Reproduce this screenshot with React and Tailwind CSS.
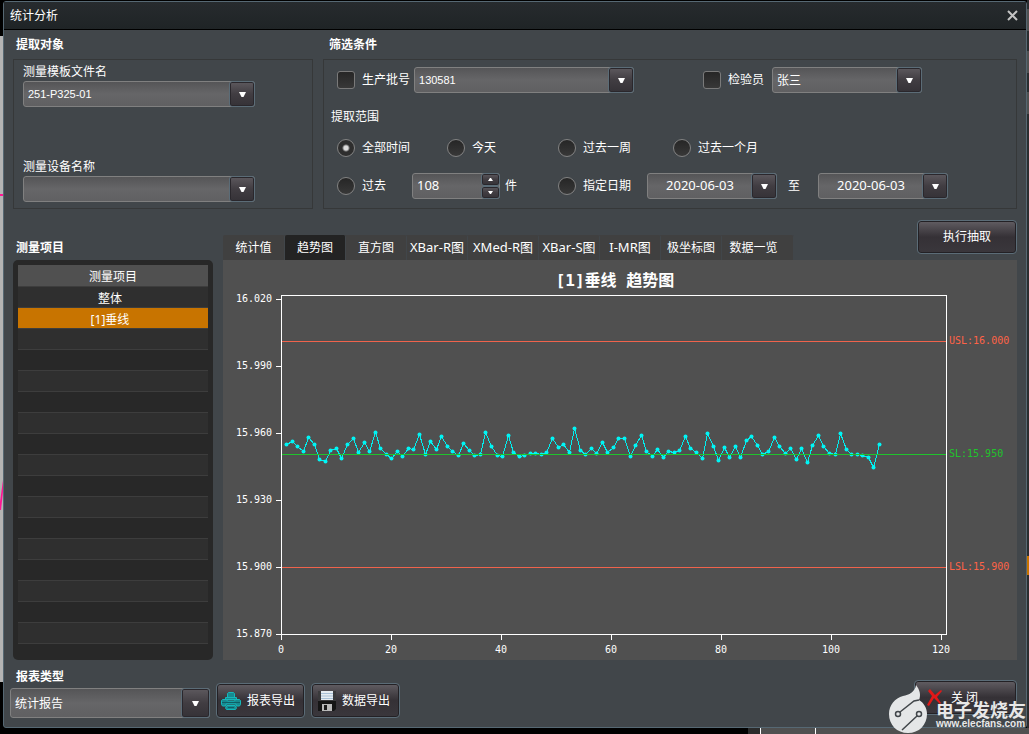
import React, { useState } from 'react'
import clsx from 'clsx'

const UI_FONT = "font-['Noto_Sans','Noto_Sans_CJK_SC',sans-serif]"
const VALUE_FONT = "font-['Liberation_Sans','Noto_Sans_CJK_SC',sans-serif]"

const TABS = [
  { name: '统计值',   cls: 'w-[62px] text-xs' },
  { name: '趋势图',   cls: 'w-[61px] text-xs' },
  { name: '直方图',   cls: 'w-[61px] text-xs' },
  { name: 'XBar-R图', cls: 'w-[61px] text-[13px]' },
  { name: 'XMed-R图', cls: 'w-[71px] text-[13px]' },
  { name: 'XBar-S图', cls: 'w-[61px] text-[13px]' },
  { name: 'I-MR图',   cls: 'w-[61px] text-[13px]' },
  { name: '极坐标图', cls: 'w-[61px] text-xs' },
  { name: '数据一览', cls: 'w-[72px] pr-[8px] text-xs' },
]

const ITEMS = ['整体', '[1]垂线']
const ROW_COUNT = 17

// sample depth below the 150 line of the chart, three steps per unit
const SAMPLES = [
  102, 93, 108, 123, 81, 104, 147, 153, 120, 114, 144, 104, 84, 126, 96, 123, 66, 114,
  132, 144, 123, 138, 114, 117, 72, 132, 93, 117, 78, 108, 123, 135, 99, 120, 135, 132,
  66, 108, 135, 138, 75, 126, 138, 135, 129, 129, 132, 126, 84, 111, 102, 126, 54, 120,
  132, 114, 129, 96, 126, 111, 84, 84, 138, 105, 75, 123, 138, 117, 141, 123, 126, 120,
  78, 114, 126, 144, 69, 108, 150, 111, 141, 108, 141, 90, 78, 105, 132, 123, 81, 108,
  129, 114, 147, 114, 156, 105, 75, 108, 129, 132, 69, 117, 132, 132, 135, 141, 171, 102,
]

const POINTS = SAMPLES.map((s, i) => [
  Math.floor(58 + (i + 1) * 5.54) + 0.5,
  Math.floor(150 + s / 3) + 0.5,
])

const Y_TICKS = ['16.020', '15.990', '15.960', '15.930', '15.900', '15.870']
const X_TICKS = [0, 20, 40, 60, 80, 100, 120]

function DownArrow() {
  return (
    <svg viewBox="0 0 7 5" className="w-[7px] h-[5px]" aria-hidden="true">
      <path d="M0 0h7L4.5 5h-2z" fill="#fff" />
    </svg>
  )
}

const arrowBox =
  'flex items-center justify-center rounded-[3px] border border-[#5b6c77] bg-linear-to-b from-[#5d595e] via-[#413d42] to-[#353237] shadow-[inset_0_0_0_1px_#2a272c]'
const fieldBox =
  'rounded-[3px] border border-[#808080] bg-linear-to-b from-[#555557] via-[#666668] to-[#606062]'

function Combo({ id, value, className, arrow = 'w-[26px]', font = VALUE_FONT, size = 'text-xs', label }) {
  return (
    <div className={clsx('grid', fieldBox, className)}>
      <select
        id={id}
        aria-label={label}
        defaultValue={value}
        className={clsx('col-start-1 row-start-1 min-w-0 appearance-none bg-transparent pl-1 pt-px text-white outline-none', font, size)}
      >
        <option value={value}>{value}</option>
      </select>
      <span className={clsx('pointer-events-none col-start-1 row-start-1 justify-self-end -m-px', arrowBox, arrow)}>
        <DownArrow />
      </span>
    </div>
  )
}

function DateField({ label }) {
  return (
    <div className={clsx('flex w-[130px] h-[26px]', fieldBox)}>
      <input
        type="text"
        aria-label={label}
        defaultValue="2020-06-03"
        className="min-w-0 flex-1 bg-transparent text-center text-[13px] text-white outline-none"
      />
      <button type="button" aria-label="选择日期" className={clsx('w-[26px] -m-px', arrowBox)}>
        <DownArrow />
      </button>
    </div>
  )
}

function Radio({ value, label, defaultChecked, className }) {
  return (
    <label className={clsx('flex items-center gap-[7px]', className)}>
      <input
        type="radio"
        name="range"
        value={value}
        defaultChecked={defaultChecked}
        className="size-[18px] appearance-none rounded-full border border-[#828282] bg-linear-to-b from-[#262626] to-[#383838] checked:bg-[radial-gradient(circle,#dcdcdc_2px,#2e2e2e_4px)]"
      />
      {label}
    </label>
  )
}

function Check({ label }) {
  return (
    <label className="flex items-center gap-[7px]">
      <input
        type="checkbox"
        className="size-[18px] appearance-none rounded-[3px] border border-[#7a7a7a] bg-linear-to-b from-[#262626] to-[#383838] checked:bg-[#c87400]"
      />
      {label}
    </label>
  )
}

function PushButton({ children, className }) {
  return (
    <button
      type="button"
      className={clsx(
        'flex items-center rounded-[4px] border border-[#5b6c77] bg-linear-to-b from-[#625e63] via-[#353136] to-[#3a373c] text-xs text-white shadow-[inset_0_0_0_1px_#232125]',
        className
      )}
    >
      {children}
    </button>
  )
}

function PrinterIcon() {
  return (
    <svg viewBox="0 0 20 18" className="w-5 h-[18px]" fill="#178a90" stroke="#14b8bb" aria-hidden="true">
      <path d="M6.500 5.500v-4l1-1h5l1 1v4z" />
      <path d="M4.500 7.500v-2h11v2z" />
      <path d="M1.500 7.500h4l1 1.500h7l1-1.500h4l1 1v4l-1 1.500h-3.500v-2h-10v2H1.500L.5 12.500v-4z" />
      <path d="M1 10.500h18" stroke="#0f5f66" />
      <path d="M6 13.500h8l1.500 2.500-1 1.500h-9l-1-1.500z" />
      <path d="M7 15.500h6" stroke="#0f5f66" />
    </svg>
  )
}

function FloppyIcon() {
  return (
    <svg viewBox="0 0 18 20" className="w-[18px] h-5" aria-hidden="true">
      <path d="M0 0h18v18l-2 2H0z" fill="#3a3a3c" />
      <path d="M0 10h18v8l-2 2H0z" fill="#151515" />
      <path d="M3 0h12v9H3z" fill="#e6ecf2" />
      <path d="M3 2.500h12M3 5h12M3 7.500h12" stroke="#a9c0d6" />
      <path d="M4 13h10v7H4z" fill="#b9b9b9" />
      <path d="M6 14h3v5H6z" fill="#1a1a1a" />
    </svg>
  )
}

function TrendChart() {
  const mono = "font-['DejaVu_Sans_Mono',monospace] text-[10px]"
  return (
    <svg viewBox="0 0 794 400" className="w-full" role="img" aria-label="[1]垂线 趋势图">
      <text
        x="392" y="26" textAnchor="middle" fill="#fff"
        className="font-['DejaVu_Sans_Mono','Noto_Sans_CJK_SC',monospace] text-[16px] font-bold"
      >
        [1]垂线 趋势图
      </text>

      {/* Axes */}
      <rect x="58.5" y="35.5" width="665" height="339" fill="none" stroke="#fff" />
      {Y_TICKS.map((t, i) => (
        <g key={t}>
          <path d={`M53 ${39.5 + i * 67}h5`} stroke="#fff" />
          <text x="13" y={42 + i * 67} fill="#fff" className={mono}>{t}</text>
        </g>
      ))}
      {X_TICKS.map((t, i) => (
        <g key={t}>
          <path d={`M${58.5 + i * 110} 375v5`} stroke="#fff" />
          <text x={58 + i * 110} y="393" textAnchor="middle" fill="#fff" className={mono}>{t}</text>
        </g>
      ))}

      {/* Series */}
      <polyline
        points={POINTS.map(p => p.join(',')).join(' ')}
        fill="none" stroke="#00f0f0" shapeRendering="crispEdges"
      />
      {POINTS.map(([x, y]) => (
        <circle key={x} cx={x} cy={y} r="2" fill="#00f5f5" />
      ))}

      {/* Limits */}
      <path d="M59 81.5h664M59 307.5h664" stroke="#f0634c" />
      <path d="M59 194.5h664" stroke="#1fc32c" />
      <text x="726" y="84" fill="#ff6347" className={mono}>USL:16.000</text>
      <text x="726" y="197" fill="#1fc32c" className={mono}>SL:15.950</text>
      <text x="726" y="310" fill="#ff6347" className={mono}>LSL:15.900</text>
    </svg>
  )
}

function Watermark() {
  return (
    <div className="pointer-events-none absolute bottom-0 right-[3px] flex items-end">
      <svg viewBox="0 0 47 50" className="w-[47px] h-[50px]" aria-hidden="true">
        <path
          d="M27 1c4 5 5 10 3 15 5 3 8 8 8 14 0 11-8 19-19 19S0 41 0 30c0-9 6-16 14-18 6-1 12-4 13-11z"
          fill="#e4e6e7"
        />
        <path d="M11 28 25 17l5-1M28 32 13 46" fill="none" stroke="#41464a" strokeWidth="1.500" />
        <circle cx="9" cy="30" r="2.500" fill="#e4e6e7" stroke="#41464a" strokeWidth="1.500" />
        <circle cx="30" cy="30" r="2.500" fill="#e4e6e7" stroke="#41464a" strokeWidth="1.500" />
      </svg>
      <div className="mb-[5px] font-bold text-[#e8e8e8]">
        <p className="text-[18px] leading-[18px]">电子发烧友</p>
        <p className={clsx('text-[10px] leading-[10px]', VALUE_FONT)}>www.elecfans.com</p>
      </div>
    </div>
  )
}

export default function App() {
  const [tab, setTab] = useState('趋势图')
  const [item, setItem] = useState('[1]垂线')

  return (
    <div className={clsx('relative flex min-h-screen flex-col bg-black text-xs text-white', UI_FONT)}>
      <div className="flex flex-1">

        {/* Window behind, left edge */}
        <div className="flex w-[3px] flex-col pt-9 pb-[46px]" aria-hidden="true">
          <div className="h-[158px] bg-[#b4b4b4]" />
          <div className="h-[2px] bg-[#ff1493]" />
          <div className="flex-1 bg-[#b4b4b4]" />
          <svg viewBox="0 0 3 30" className="w-[3px] h-[30px] bg-[#b4b4b4]">
            <path d="M3 0v12L1 30H0V22z" fill="#ff1493" />
          </svg>
          <div className="h-[172px] bg-[#b4b4b4]" />
        </div>

        <main className="mt-px flex min-w-0 flex-1 flex-col rounded-[3px] border border-[#566873] bg-[#41464a]">
          <header className="flex h-7 items-center justify-between border-b border-black bg-linear-to-b from-[#272b2e] to-[#1f2426] pl-1.5 pr-2">
            <h1>统计分析</h1>
            <button type="button" aria-label="关闭窗口">
              <svg viewBox="0 0 11 11" className="size-[11px]" fill="none" stroke="#c4c4c4" strokeWidth="2">
                <path d="M1 1l9 9M10 1l-9 9" />
              </svg>
            </button>
          </header>

          {/* Source and filter */}
          <div className="flex gap-[10px] px-[9px]">
            <section className="w-[300px]">
              <h2 className="pl-[3px] leading-[29px] font-bold">提取对象</h2>
              <div className="h-[150px] border border-[#363839] px-[9px] pt-[3px]">
                <label htmlFor="template" className="block leading-[18px]">测量模板文件名</label>
                <Combo id="template" value="251-P325-01" className="w-[232px] h-[26px]" size="text-[11px]" />
                <label htmlFor="device" className="mt-[51px] block leading-[18px]">测量设备名称</label>
                <Combo id="device" value="" className="w-[232px] h-[26px]" />
              </div>
            </section>

            <section className="min-w-0 flex-1">
              <h2 className="pl-[6px] leading-[29px] font-bold">筛选条件</h2>
              <div className="h-[150px] border border-[#363839] px-[7px] pt-[7px]">
                <div className="flex items-center pl-[6px]">
                  <Check label="生产批号" />
                  <Combo label="生产批号" value="130581" className="ml-1 w-[220px] h-[26px]" size="text-[11px]" />
                  <div className="ml-[69px]"><Check label="检验员" /></div>
                  <Combo label="检验员" value="张三" className="ml-2 w-[150px] h-[26px]" />
                </div>

                <h3 className="mt-[14px] leading-[20px]">提取范围</h3>

                <div className="mt-[11px] flex h-5 items-center pl-[6px]">
                  <Radio value="all" label="全部时间" defaultChecked className="w-[110px]" />
                  <Radio value="today" label="今天" className="w-[111px]" />
                  <Radio value="week" label="过去一周" className="w-[115px]" />
                  <Radio value="month" label="过去一个月" />
                </div>

                <div className="mt-[15px] flex h-[26px] items-center pl-[6px]">
                  <Radio value="past" label="过去" className="w-[75px]" />
                  <div className={clsx('flex w-[88px] h-[26px]', fieldBox)}>
                    <input
                      type="text"
                      aria-label="件数"
                      defaultValue="108"
                      className="min-w-0 flex-1 bg-transparent pl-1 text-[13px] outline-none"
                    />
                    <div className="-m-px flex w-[19px] flex-col">
                      <button type="button" aria-label="增加" className={clsx('flex-1', arrowBox)}>
                        <svg viewBox="0 0 5 3" className="w-[5px] h-[3px]"><path d="M0 3h5L3 0H2z" fill="#fff" /></svg>
                      </button>
                      <button type="button" aria-label="减少" className={clsx('flex-1', arrowBox)}>
                        <svg viewBox="0 0 5 3" className="w-[5px] h-[3px]"><path d="M0 0h5L3 3H2z" fill="#fff" /></svg>
                      </button>
                    </div>
                  </div>
                  <span className="w-[58px] pl-[5px]">件</span>
                  <Radio value="dates" label="指定日期" className="w-[89px]" />
                  <DateField label="开始日期" />
                  <span className="w-[41px] pl-[11px]">至</span>
                  <DateField label="结束日期" />
                </div>
              </div>
            </section>
          </div>

          {/* Items and chart */}
          <div className="flex flex-1 gap-[10px] px-[9px]">
            <section className="flex w-[200px] flex-col">
              <h2 className="h-[51px] pl-[3px] pt-[29px] leading-[20px] font-bold">测量项目</h2>
              <div className="flex-1 rounded-[5px] bg-[#282828] p-[5px]">
                <table className="w-full border-separate border-spacing-0 text-center">
                  <thead>
                    <tr className="h-[22px]">
                      <th className="border-b border-[#3d3d3d] bg-[#505050] px-0 pt-[2px] pb-0 font-normal leading-[19px]">测量项目</th>
                    </tr>
                  </thead>
                  <tbody>
                    {Array.from({ length: ROW_COUNT }, (_, i) => {
                      const name = ITEMS[i]
                      const picked = name && name === item
                      return (
                        <tr key={i} onClick={() => name && setItem(name)}>
                          <td
                            className={clsx(
                              'h-[21px] border-b border-[#3d3d3d] pl-0 pr-[6px] pt-[3px] pb-0 leading-[17px]',
                              picked ? 'bg-[#c87400]' : i % 2 ? 'bg-[#282828]' : 'bg-[#2f2f2f]'
                            )}
                          >
                            {name}
                          </td>
                        </tr>
                      )
                    })}
                  </tbody>
                </table>
              </div>
            </section>

            <section className="flex min-w-0 flex-1 flex-col">
              <div className="flex h-[51px] items-end justify-between">
                <div role="tablist" className="flex bg-[#404040] rounded-t-[2px]">
                  {TABS.map(t => (
                    <button
                      key={t.name}
                      type="button"
                      role="tab"
                      aria-selected={t.name === tab}
                      onClick={() => setTab(t.name)}
                      className={clsx(
                        'h-[25px] whitespace-nowrap rounded-t-[2px] border-r border-[#41464a]',
                        t.cls,
                        t.name === tab && 'bg-[#232323]'
                      )}
                    >
                      {t.name}
                    </button>
                  ))}
                </div>
                <PushButton className="mb-[6px] h-[34px] w-[100px] justify-center">执行抽取</PushButton>
              </div>
              <div className="flex-1 bg-[#505050]">
                <TrendChart />
              </div>
            </section>
          </div>

          {/* Report */}
          <footer className="flex items-end justify-between pl-[6px] pr-[9px] pb-[9px] pt-[7px]">
            <div className="flex items-end gap-[6px]">
              <div>
                <label htmlFor="report" className="mb-px block pl-[6px] leading-[20px] font-bold">报表类型</label>
                <Combo id="report" value="统计报告" className="w-[200px] h-[30px]" arrow="w-[29px]" font={UI_FONT} />
              </div>
              <PushButton className="h-[35px] w-[89px] gap-[6px] pl-1"><PrinterIcon />报表导出</PushButton>
              <PushButton className="h-[35px] w-[89px] gap-[6px] pl-[6px]"><FloppyIcon />数据导出</PushButton>
            </div>
            <div className="pb-[3px]">
              <PushButton className="h-[35px] w-[103px] gap-[8px] pl-[12px]">
                <svg viewBox="0 0 16 18" className="w-4 h-[18px]" aria-hidden="true">
                  <path d="M1 2l2-2 5 6 6-5 1 1-5 6 4 6-1 1-6-6-5 8-2-1 5-9z" fill="#e01818" />
                </svg>
                关 闭
              </PushButton>
            </div>
          </footer>
        </main>

        {/* Window behind, right edge */}
        <div className="flex w-[2px] flex-col bg-[#2b2d2f]" aria-hidden="true">
          <div className="h-[9px]" />
          <div className="h-[22px] bg-[#505050]" />
          <div className="h-[20px]" />
          <div className="h-[22px] bg-[#505050]" />
          <div className="h-[19px]" />
          <div className="h-[22px] bg-[#505050]" />
          <div className="flex-1" />
          <div className="h-[19px] bg-[#c87400]" />
          <div className="h-[153px]" />
        </div>
      </div>

      {/* Window behind, bottom edge */}
      <div className="flex h-[6px] justify-end" aria-hidden="true">
        <div className="w-[12px] bg-[#2b2b2b]" />
        <div className="w-[56px] border-x border-white bg-[#505050]" />
        <div className="w-[213px] bg-[#505050]" />
      </div>

      <Watermark />
    </div>
  )
}
